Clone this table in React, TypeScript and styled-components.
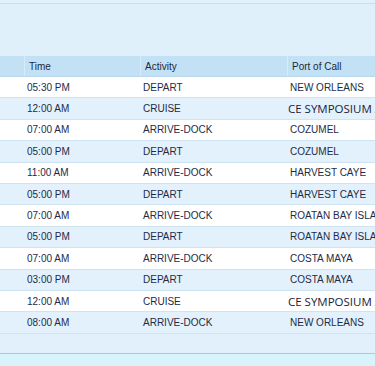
import React from "react";
import styled, { createGlobalStyle } from "styled-components";

const GlobalStyle = createGlobalStyle`
  html, body {
    margin: 0;
    padding: 0;
    background: #dff0fb;
  }
`;

type Stop = {
  time: string;
  activity: string;
  port: string;
};

const stops: Stop[] = [
  { time: "05:30 PM", activity: "DEPART", port: "NEW ORLEANS" },
  { time: "12:00 AM", activity: "CRUISE", port: "CE SYMPOSIUM AT SEA" },
  { time: "07:00 AM", activity: "ARRIVE-DOCK", port: "COZUMEL" },
  { time: "05:00 PM", activity: "DEPART", port: "COZUMEL" },
  { time: "11:00 AM", activity: "ARRIVE-DOCK", port: "HARVEST CAYE" },
  { time: "05:00 PM", activity: "DEPART", port: "HARVEST CAYE" },
  { time: "07:00 AM", activity: "ARRIVE-DOCK", port: "ROATAN BAY ISLANDS" },
  { time: "05:00 PM", activity: "DEPART", port: "ROATAN BAY ISLANDS" },
  { time: "07:00 AM", activity: "ARRIVE-DOCK", port: "COSTA MAYA" },
  { time: "03:00 PM", activity: "DEPART", port: "COSTA MAYA" },
  { time: "12:00 AM", activity: "CRUISE", port: "CE SYMPOSIUM AT SEA" },
  { time: "08:00 AM", activity: "ARRIVE-DOCK", port: "NEW ORLEANS" }
];

const Page = styled.div`
  width: 375px;
  height: 366px;
  overflow: hidden;
  display: flex;
  flex-direction: column;
  background: #dff0fb;
  font-family: "Liberation Sans", Arial, sans-serif;
`;

const TopStrip = styled.div`
  height: 3px;
  flex: none;
  border-bottom: 1px solid #c6e2f2;
  background: #e2f2fc;
`;

const Toolbar = styled.div`
  height: 52px;
  flex: none;
`;

const columns = "24px 116px 147px 1fr";

const HeaderRow = styled.div`
  display: grid;
  grid-template-columns: ${columns};
  height: 20px;
  flex: none;
  background: #c3e1f5;
  border-bottom: 1px solid #b9d8ee;
  box-sizing: content-box;
`;

const HeaderCell = styled.div<{ $first?: boolean }>`
  display: flex;
  align-items: center;
  padding-left: 4px;
  border-left: ${(p) => (p.$first ? "none" : "1px solid #d7ecf9")};
  font-size: 10px;
  color: #1b2838;
  white-space: nowrap;
  overflow: hidden;
`;

const Row = styled.div<{ $odd: boolean }>`
  display: grid;
  grid-template-columns: ${columns};
  height: 21.4px;
  flex: none;
  box-sizing: border-box;
  background: ${(p) => (p.$odd ? "#e3f1fc" : "#ffffff")};
  border-bottom: 1px solid #cfe4f3;
`;

const Cell = styled.div`
  display: flex;
  align-items: center;
  padding-left: 3px;
  font-size: 10px;
  color: #1e2b47;
  white-space: nowrap;
  overflow: hidden;
`;

const PortCell = styled(Cell)<{ $alt: boolean }>`
  padding-left: ${(p) => (p.$alt ? "1px" : "3px")};
  font-family: ${(p) => (p.$alt ? '"Open Sans", "Liberation Sans", sans-serif' : "inherit")};
  font-size: ${(p) => (p.$alt ? "11.5px" : "10px")};
  font-weight: ${(p) => (p.$alt ? 500 : 400)};
  color: ${(p) => (p.$alt ? "#1a2236" : "#1e2b47")};
`;

const Filler = styled.div`
  flex: 1;
  background: #e1f0fb;
`;

const Footer = styled.div`
  height: 12px;
  flex: none;
  border-top: 1px solid #a9c9e2;
  background: #d9f3fd;
`;

const App = () => {
  return (
    <Page>
      <GlobalStyle />
      <TopStrip />
      <Toolbar />
      <HeaderRow>
        <HeaderCell $first />
        <HeaderCell>Time</HeaderCell>
        <HeaderCell>Activity</HeaderCell>
        <HeaderCell>Port of Call</HeaderCell>
      </HeaderRow>
      {stops.map((stop, i) => (
        <Row key={i} $odd={i % 2 === 1}>
          <Cell />
          <Cell>{stop.time}</Cell>
          <Cell>{stop.activity}</Cell>
          <PortCell $alt={stop.activity === "CRUISE"}>{stop.port}</PortCell>
        </Row>
      ))}
      <Filler />
      <Footer />
    </Page>
  );
};

export default App;
